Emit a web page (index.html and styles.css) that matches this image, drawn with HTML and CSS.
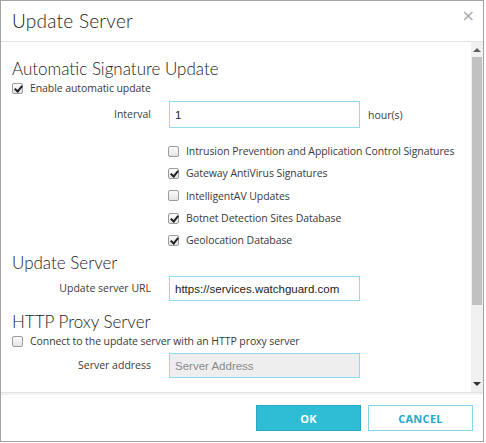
FILE: index.html
```html
<!DOCTYPE html>
<html>
<head>
<meta charset="utf-8">
<link rel="stylesheet" href="styles.css">
</head>
<body>
<div class="dialog">
  <div class="header">
    <h1 class="title">Update Server</h1>
    <span class="close">&times;</span>
  </div>
  <div class="body">
    <div class="content">
      <h2 class="section">Automatic Signature Update</h2>
      <label class="check"><span class="box checked"></span>Enable automatic update</label>
      <div class="field interval">
        <span class="label">Interval</span>
        <div class="input">1</div>
        <span class="unit">hour(s)</span>
      </div>
      <div class="checklist">
        <label class="check"><span class="box"></span>Intrusion Prevention and Application Control Signatures</label>
        <label class="check"><span class="box checked"></span>Gateway AntiVirus Signatures</label>
        <label class="check"><span class="box"></span>IntelligentAV Updates</label>
        <label class="check"><span class="box checked"></span>Botnet Detection Sites Database</label>
        <label class="check"><span class="box checked"></span>Geolocation Database</label>
      </div>
      <h2 class="section server">Update Server</h2>
      <div class="field url">
        <span class="label">Update server URL</span>
        <div class="input">https://services.watchguard.com</div>
      </div>
      <h2 class="section proxy">HTTP Proxy Server</h2>
      <label class="check"><span class="box"></span>Connect to the update server with an HTTP proxy server</label>
      <div class="field addr">
        <span class="label">Server address</span>
        <div class="input disabled">Server Address</div>
      </div>
    </div>
    <div class="scrollbar">
      <span class="arrow up"></span>
      <span class="thumb"></span>
      <span class="track"></span>
      <span class="arrow down"></span>
    </div>
  </div>
  <div class="footer">
    <button class="btn ok">OK</button>
    <button class="btn cancel">CANCEL</button>
  </div>
</div>
</body>
</html>
```

FILE: styles.css
```css
html, body {
  margin: 0;
  padding: 0;
  background: #fff;
}

.dialog {
  box-sizing: border-box;
  width: 484px;
  height: 442px;
  border: 1px solid #a3a3a3;
  display: flex;
  flex-direction: column;
  font-family: "Open Sans", "Noto Sans", sans-serif;
  color: #333;
  overflow: hidden;
}

.header {
  height: 40px;
  border-bottom: 1px solid #e2e2e2;
  display: flex;
  align-items: center;
  justify-content: space-between;
  padding: 0 8px 0 11px;
  flex: none;
}

.title {
  margin: 0;
  font-family: "Lato", sans-serif;
  font-weight: 300;
  font-size: 19px;
  letter-spacing: 0.25px;
  color: #222;
  padding-bottom: 1px;
}

.close {
  font-family: "DejaVu Sans", sans-serif;
  font-size: 16px;
  color: #aaa;
  line-height: 16px;
  margin-top: -10px;
}

.body {
  flex: 1;
  display: flex;
  min-height: 0;
  border-bottom: 1px solid #e2e2e2;
}

.content {
  flex: 1;
  padding: 17px 0 0 11px;
  display: flex;
  flex-direction: column;
  align-items: flex-start;
}

.section {
  margin: 0;
  font-family: "Lato", sans-serif;
  font-weight: 300;
  font-size: 17px;
  line-height: 20px;
  letter-spacing: 0;
  color: #222;
}

.check {
  display: flex;
  align-items: center;
  gap: 7px;
  font-size: 10.5px;
  letter-spacing: -0.08px;
  line-height: 18px;
  height: 18px;
  color: #3a3a3a;
  white-space: nowrap;
}

.box {
  box-sizing: border-box;
  width: 11px;
  height: 11px;
  border: 1px solid #9c9c9c;
  border-radius: 2px;
  background: linear-gradient(#fcfcfc, #e4e4e4);
  position: relative;
  flex: none;
}

.box.checked::after {
  content: "";
  position: absolute;
  left: 3px;
  top: 0px;
  width: 3px;
  height: 6px;
  border: solid #222;
  border-width: 0 2px 2px 0;
  transform: rotate(40deg);
}

.field {
  display: grid;
  grid-template-columns: 139px 191px auto;
  column-gap: 18px;
  align-items: center;
}

.field .label {
  text-align: right;
  font-size: 10.5px;
  color: #3a3a3a;
  align-self: start;
}

.input {
  box-sizing: border-box;
  width: 191px;
  border: 1px solid #8edaee;
  font-family: "Liberation Sans", Arial, sans-serif;
  font-size: 11.5px;
  color: #222;
  padding: 0 5px;
  display: flex;
  align-items: center;
}

.interval {
  margin-top: 4px;
}
.interval .input { height: 27px; }
.interval .label { padding-top: 6px; }
.interval .unit {
  font-size: 10.5px;
  color: #3a3a3a;
  margin-left: -10px;
  padding-top: 1px;
}

.checklist {
  margin: 12px 0 0 156px;
  display: flex;
  flex-direction: column;
}
.checklist .check {
  height: 22.3px;
  line-height: 22.3px;
}

.server {
  margin-top: 2px;
}

.url {
  margin-top: 3px;
}
.url .input, .addr .input { height: 25px; }
.url .label, .addr .label { padding-top: 5px; }

.proxy {
  margin-top: 11px;
}

.addr {
  margin-top: 3px;
}

.input.disabled {
  background: #eeeeee;
  color: #8a8a8a;
}

.scrollbar {
  width: 12px;
  flex: none;
  background: #f0f0f0;
  display: flex;
  flex-direction: column;
  align-items: center;
}

.arrow {
  width: 0;
  height: 0;
  border-left: 4px solid transparent;
  border-right: 4px solid transparent;
  flex: none;
}
.arrow.up {
  border-bottom: 4px solid #606060;
  margin: 6px 0 5px;
}
.arrow.down {
  border-top: 4px solid #303030;
  margin: 4px 0 6px;
}
.thumb {
  width: 10px;
  height: 248px;
  background: #c1c1c1;
  flex: none;
}
.track {
  flex: 1;
}

.footer {
  height: 48px;
  flex: none;
  display: flex;
  justify-content: flex-end;
  align-items: flex-start;
  gap: 7px;
  padding: 10px 10px 0 0;
  box-sizing: border-box;
  border-top: 2px solid #f2f2f2;
}

.btn {
  width: 105px;
  height: 26px;
  box-sizing: border-box;
  font-family: "Open Sans", sans-serif;
  font-weight: 700;
  font-size: 11px;
  letter-spacing: 0.3px;
  cursor: pointer;
  padding: 0;
}

.ok {
  background: #2ebdd5;
  border: 1px solid #26a9c1;
  color: #fff;
}

.cancel {
  background: #fff;
  border: 1px solid #7fd6ea;
  color: #1fa8c9;
}
```
